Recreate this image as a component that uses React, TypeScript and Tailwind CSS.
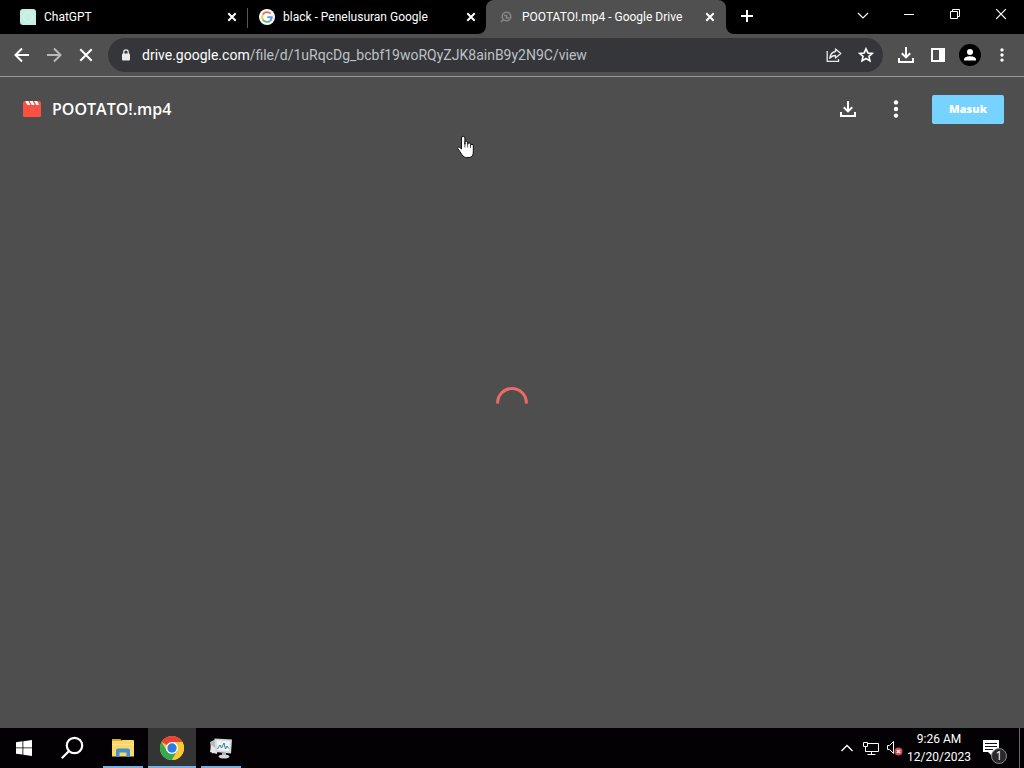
import type { ReactNode } from "react";

const TITLE = "POOTATO!.mp4";

function CloseGlyph() {
  return (
    <svg width="10" height="10" viewBox="0 0 10 10" stroke="#fff" strokeWidth="2" fill="none">
      <path d="M1.300 1.300l7.400 7.400M8.700 1.300l-7.400 7.400" />
    </svg>
  );
}

function DotsGlyph({ r }: { r: number }) {
  return (
    <svg width="18" height="20" viewBox="0 0 18 20" fill="#fff">
      <circle cx="9" cy={10 - r * 3} r={r} />
      <circle cx="9" cy="10" r={r} />
      <circle cx="9" cy={10 + r * 3} r={r} />
    </svg>
  );
}

function DownloadGlyph() {
  return (
    <svg width="18" height="18" viewBox="0 0 18 18" fill="none" stroke="#fff" strokeWidth="2">
      <path d="M9 1v10M4.800 7.200L9 11.400l4.200-4.200M2 12v4h14v-4" />
    </svg>
  );
}

function ChatIcon() {
  return (
    <svg width="16" height="16" viewBox="0 0 16 16">
      <path d="M3 0h10a3 3 0 0 1 3 3v13H3a3 3 0 0 1-3-3V3a3 3 0 0 1 3-3z" fill="#c5efe2" />
      <circle cx="8" cy="8" r="4.500" fill="none" stroke="#d0f3e8" strokeWidth="1.500" />
    </svg>
  );
}

function GoogleIcon() {
  return (
    <svg width="16" height="16" viewBox="0 0 16 16" fill="none" strokeWidth="1.900">
      <circle cx="8" cy="8" r="8" fill="#fff" />
      <path d="M11.600 4.700A4.900 4.900 0 0 0 3.800 5.500" stroke="#e8685f" />
      <path d="M3.800 5.500a4.900 4.900 0 0 0 0 5" stroke="#f5c84b" />
      <path d="M3.800 10.500a4.900 4.900 0 0 0 7.200 1.400" stroke="#63b97b" />
      <path d="M11 11.900A4.700 4.700 0 0 0 12.800 8.300H8.300" stroke="#5d9ae8" />
    </svg>
  );
}

function LoadingIcon() {
  return (
    <svg width="16" height="16" viewBox="0 0 16 16" fill="none" stroke="#858585" strokeWidth="1.600">
      <circle cx="8.500" cy="7.500" r="4.300" />
      <path d="M6 6.500h2.500v2.500h3M3 13l3-3" />
    </svg>
  );
}

function Tab({ icon, title, active, divider }: { icon: ReactNode; title: string; active?: boolean; divider?: boolean }) {
  return (
    <div
      className={
        "relative flex h-[34px] min-w-0 shrink basis-60 items-center pr-2 pl-3 " +
        (active ? "rounded-t-lg bg-[#505050]" : "")
      }
    >
      {active && (
        <>
          <svg className="absolute bottom-0 -left-2" width="8" height="8" viewBox="0 0 8 8">
            <path d="M8 0v8H0a8 8 0 0 0 8-8z" fill="#505050" />
          </svg>
          <svg className="absolute -right-2 bottom-0" width="8" height="8" viewBox="0 0 8 8">
            <path d="M0 0v8h8a8 8 0 0 1-8-8z" fill="#505050" />
          </svg>
        </>
      )}
      <span className="shrink-0">{icon}</span>
      <a href="#" className="ml-2 min-w-0 flex-1 truncate text-[12px] leading-4 text-white">
        {title}
      </a>
      <button type="button" aria-label={"Close " + title} className="flex size-4 shrink-0 items-center justify-center">
        <CloseGlyph />
      </button>
      {divider && <span className="absolute top-2 right-0 h-5 w-px bg-[#555]" />}
    </div>
  );
}

function ToolButton({ label, children, className = "w-8" }: { label: string; children: ReactNode; className?: string }) {
  return (
    <button type="button" aria-label={label} className={"flex h-8 shrink-0 items-center justify-center " + className}>
      {children}
    </button>
  );
}

function TabStrip() {
  return (
    <div className="flex h-[34px] shrink-0 bg-black pl-2 font-['Roboto','Open_Sans',sans-serif]">
      <div className="flex min-w-0 flex-1 -space-x-px">
        <Tab icon={<ChatIcon />} title="ChatGPT" divider />
        <Tab icon={<GoogleIcon />} title="black - Penelusuran Google" />
        <Tab icon={<LoadingIcon />} title={TITLE + " - Google Drive"} active />
        <ToolButton label="New tab" className="ml-1 w-9">
          <svg width="12" height="12" viewBox="0 0 12 12" stroke="#fff" strokeWidth="2">
            <path d="M6 0v12M0 6h12" />
          </svg>
        </ToolButton>
      </div>
      <div className="flex h-7">
        <ToolButton label="Search tabs" className="w-[46px]">
          <svg width="12" height="12" viewBox="0 0 12 12" fill="none" stroke="#fff" strokeWidth="1.200">
            <path d="M1 3l5 5 5-5" />
          </svg>
        </ToolButton>
        <ToolButton label="Minimize" className="w-[46px]">
          <svg width="10" height="10" viewBox="0 0 10 10" stroke="#fff">
            <path d="M0 3.500h10" />
          </svg>
        </ToolButton>
        <ToolButton label="Restore" className="w-[46px]">
          <svg width="10" height="14" viewBox="0 0 10 14" fill="none" stroke="#fff">
            <path d="M.5 2.500h7v7h-7zM2.500 2.500v-2h7v7h-2" />
          </svg>
        </ToolButton>
        <ToolButton label="Close window" className="w-[46px]">
          <svg width="10" height="14" viewBox="0 0 10 14" stroke="#fff" strokeWidth="1.200">
            <path d="M0 0l10 10M10 0L0 10" />
          </svg>
        </ToolButton>
      </div>
    </div>
  );
}

function Toolbar() {
  return (
    <div className="flex h-[43px] shrink-0 items-center border-b border-[#999] bg-[#505050] px-[6px]">
      <ToolButton label="Back">
        <svg width="16" height="16" viewBox="0 0 16 16" fill="none" stroke="#fff" strokeWidth="2">
          <path d="M15 8H2M8 1.500L1.500 8 8 14.500" />
        </svg>
      </ToolButton>
      <ToolButton label="Forward">
        <svg width="16" height="16" viewBox="0 0 16 16" fill="none" stroke="#b8b8b8" strokeWidth="2">
          <path d="M1 8h13M8 1.500L14.500 8 8 14.500" />
        </svg>
      </ToolButton>
      <ToolButton label="Stop">
        <svg width="14" height="14" viewBox="0 0 14 14" fill="none" stroke="#fff" strokeWidth="2">
          <path d="M1.300 1.300l11.400 11.400M12.700 1.300L1.300 12.700" />
        </svg>
      </ToolButton>
      <div className="mr-[7px] ml-[6px] flex h-[34px] min-w-0 flex-1 items-center rounded-full bg-[#35363a] pr-px pl-[13px]">
        <svg className="shrink-0" width="10" height="12" viewBox="0 0 10 12">
          <rect x="1" y="4.500" width="8" height="7" rx="1" fill="#e8eaed" />
          <path d="M2.800 5V3a2.200 2.200 0 0 1 4.400 0v2" fill="none" stroke="#e8eaed" strokeWidth="1.300" />
        </svg>
        <a
          href="#"
          className="ml-[11px] min-w-0 flex-1 truncate font-['Roboto','Open_Sans',sans-serif] text-[14px] leading-5 text-[#bdc1c6]"
        >
          <span className="text-white">drive.google.com</span>/file/d/1uRqcDg_bcbf19woRQyZJK8ainB9y2N9C/view
        </a>
        <ToolButton label="Share this page">
          <svg width="16" height="16" viewBox="0 0 16 16" fill="none" stroke="#e8eaed" strokeWidth="1.300">
            <path d="M1.200 4v10.300h11.300V12" />
            <path d="M9.500 2l5.300 4.500-5.300 4.500V8.500C7 8.500 5 9.300 3.700 11.300 4.200 7.500 6.200 5 9.500 4.500z" strokeLinejoin="round" />
          </svg>
        </ToolButton>
        <ToolButton label="Bookmark this tab">
          <svg width="16" height="16" viewBox="0 0 16 16" fill="none" stroke="#fff" strokeWidth="1.600">
            <path d="M8 1.800l1.850 4.150 4.500.45-3.400 3 1 4.450L8 11.500l-3.950 2.350 1-4.450-3.400-3 4.500-.45z" />
          </svg>
        </ToolButton>
      </div>
      <ToolButton label="Downloads">
        <DownloadGlyph />
      </ToolButton>
      <ToolButton label="Side panel">
        <svg width="14" height="14" viewBox="0 0 14 14">
          <path d="M0 0h14v14H0zM2 2v10h6V2z" fill="#fff" fillRule="evenodd" />
        </svg>
      </ToolButton>
      <ToolButton label="Profile">
        <svg width="22" height="22" viewBox="0 0 22 22">
          <circle cx="11" cy="11" r="11" fill="#000" />
          <circle cx="11" cy="8" r="3" fill="#fff" />
          <path d="M5 16.500v-1.200C5 13 9 12.200 11 12.200s6 .8 6 3.100v1.200z" fill="#fff" />
        </svg>
      </ToolButton>
      <ToolButton label="Chrome menu">
        <DotsGlyph r={1.7} />
      </ToolButton>
    </div>
  );
}

function Viewer() {
  return (
    <main className="grid flex-1 grid-cols-1 grid-rows-1 bg-[#4e4e4e]">
      <header className="col-start-1 row-start-1 flex h-16 items-center self-start pr-5 pl-[23px]">
        <svg width="18" height="18" viewBox="0 0 18 18">
          <rect y="1" width="18" height="16" rx="1.500" fill="#fa5144" />
          <path d="M2.300 1h3l2 4h-3zM6.700 1h3l2 4h-3zM11.200 1h3l2 4h-3z" fill="#fff" />
        </svg>
        <h1 className="ml-[11px] min-w-0 flex-1 truncate text-[16px] leading-6 font-semibold text-white">{TITLE}</h1>
        <ToolButton label="Download" className="w-12">
          <DownloadGlyph />
        </ToolButton>
        <ToolButton label="More actions" className="w-12">
          <DotsGlyph r={2.2} />
        </ToolButton>
        <button
          type="button"
          className="ml-3 h-[29px] w-[72px] rounded-xs bg-[#76d2ff] text-[11px] leading-4 font-extrabold text-white"
        >
          Masuk
        </button>
      </header>
      <div className="col-start-1 row-start-1 place-self-center" role="status" aria-label="Loading">
        <svg width="32" height="32" viewBox="0 0 32 32" fill="none">
          <path d="M1.600 16.500V15.900a14.400 14.400 0 0 1 28.800 0V16.500" stroke="#ef6a66" strokeWidth="3" />
        </svg>
      </div>
    </main>
  );
}

function TaskButton({ label, open, active, children }: { label: string; open?: boolean; active?: boolean; children: ReactNode }) {
  return (
    <button
      type="button"
      aria-label={label}
      className={"flex h-10 w-12 flex-col items-center " + (active ? "bg-[#343434]" : "")}
    >
      <span className="flex flex-1 items-center justify-center">{children}</span>
      {open && <span className={"-mt-[2px] h-[2px] bg-[#76b0e6] " + (active ? "w-12" : "w-10")} />}
    </button>
  );
}

function Taskbar() {
  return (
    <footer className="flex h-10 shrink-0 items-center bg-[#030103] text-white">
      <TaskButton label="Start">
        <svg width="16" height="16" viewBox="0 0 16 16" fill="#fff">
          <path d="M0 2.200l6.500-.9v6.200H0zM7.300 1.200L16 0v7.500H7.300zM0 8.300h6.500v6.300L0 13.700zM7.300 8.300H16V16l-8.700-1.200z" />
        </svg>
      </TaskButton>
      <TaskButton label="Search">
        <svg width="24" height="24" viewBox="0 0 24 24" fill="none" stroke="#fff" strokeWidth="2.200">
          <circle cx="14.500" cy="9.500" r="7.700" />
          <path d="M9 15L1.800 22.200" />
        </svg>
      </TaskButton>
      <div className="ml-[3px] flex gap-px">
        <TaskButton label="File Explorer" open>
          <svg width="22" height="20" viewBox="0 0 22 20">
            <path d="M0 1h8.500l1.500 2H0z" fill="#dca632" />
            <path d="M0 3h9l1.500-1H21a1 1 0 0 1 1 1v15.500H0z" fill="#fbd768" />
            <path d="M0 6h22v1H0z" fill="#ffe391" />
            <path d="M4 19v-6.500a2 2 0 0 1 2-2h10a2 2 0 0 1 2 2V19h-3.500v-4.500h-7V19z" fill="#4390cf" />
          </svg>
        </TaskButton>
        <TaskButton label="Google Chrome" open active>
          <svg width="24" height="24" viewBox="0 0 24 24">
            <circle cx="12" cy="12" r="12" fill="#fcc934" />
            <path d="M12 12L1.600 6A12 12 0 0 1 22.400 6z" fill="#ea4335" />
            <path d="M1.600 6A12 12 0 0 0 12 24l5.200-9H6.800z" fill="#34a853" />
            <path d="M22.400 6H12v6l5.200 3L12 24A12 12 0 0 0 22.400 6z" fill="#fcc934" />
            <circle cx="12" cy="12" r="6" fill="#fff" />
            <circle cx="12" cy="12" r="4.700" fill="#2f7ae5" />
          </svg>
        </TaskButton>
        <TaskButton label="Task Manager" open>
          <svg width="24" height="24" viewBox="0 0 24 24">
            <path d="M1 6l6-3 2 13-6 1.500z" fill="#b5bbba" />
            <path d="M2 9l-1 7 7 2v-5z" fill="#e5e7e5" />
            <path d="M5.500 2.500L23 3.500l-1 14-15.500-1.500z" fill="#d4dad9" />
            <path d="M7.500 4.500l13.500.8-.8 10-11.700-1.100z" fill="#edf5f5" />
            <path d="M8.500 13l2.500-4 1.500 3 2.500-5 1.500 6 1.500-3 1.800 2.500" fill="none" stroke="#397f99" strokeWidth="1" />
            <path d="M13 16.500h4V19h-4z" fill="#a7aeae" />
            <ellipse cx="15" cy="20.500" rx="5.500" ry="2" fill="#d2d6d5" />
          </svg>
        </TaskButton>
      </div>
      <div className="ml-auto flex items-center">
        <ToolButton label="Show hidden icons" className="w-6">
          <svg width="12" height="8" viewBox="0 0 12 8" fill="none" stroke="#fff" strokeWidth="1.400">
            <path d="M.5 7L6 1.500 11.500 7" />
          </svg>
        </ToolButton>
        <ToolButton label="Network" className="w-6">
          <svg width="18" height="16" viewBox="0 0 18 16" fill="none" stroke="#fff">
            <path d="M5.500 3.500h11v8h-13V7M9.500 11.500v3M5.500 14.500h8" />
            <path d="M1.500 2.500h4v4h-4zM3.500 6.500v5" />
          </svg>
        </ToolButton>
        <ToolButton label="Volume muted" className="w-6">
          <svg width="18" height="16" viewBox="0 0 18 16" fill="none">
            <path d="M1.500 5.500h2l4-4v12l-4-4h-2z" stroke="#fff" />
            <circle cx="12.500" cy="11.500" r="4" fill="#cf4a55" />
            <path d="M10.800 9.800l3.400 3.400M14.200 9.800l-3.400 3.400" stroke="#fff" strokeWidth="1.200" />
          </svg>
        </ToolButton>
        <time className="w-16 text-center font-['Roboto','Open_Sans',sans-serif] text-[12px] leading-[18px] whitespace-nowrap">
          9:26 AM
          <br />
          12/20/2023
        </time>
        <button type="button" aria-label="1 new notification" className="relative ml-3 flex h-10 w-9 items-center">
          <svg className="mb-px" width="16" height="18" viewBox="0 0 16 18">
            <path d="M0 1h16v12H9v4l-4-4H0z" fill="#fff" />
            <path d="M2 4.500h12M2 7.500h12M2 10.500h8" stroke="#111" />
          </svg>
          <span className="absolute top-5 left-2 flex size-4 items-center justify-center rounded-full border border-[#888] bg-[#292929] text-[12px] leading-4">
            1
          </span>
        </button>
        <button type="button" aria-label="Show desktop" className="h-10 w-[5px] border-l border-[#666]" />
      </div>
    </footer>
  );
}

export default function App() {
  return (
    <div className="relative flex min-h-screen flex-col bg-[#4e4e4e] font-['Open_Sans','Noto_Sans',sans-serif]">
      <TabStrip />
      <Toolbar />
      <Viewer />
      <Taskbar />
      <svg className="pointer-events-none absolute top-[135px] left-[457px]" width="18" height="24" viewBox="0 0 18 24">
        <path
          d="M4.500 14V3a1.700 1.700 0 0 1 3.400 0v6.200V7.500a1.400 1.400 0 0 1 2.800.3v1.400a1.400 1.400 0 0 1 2.800.2v1.200a1.400 1.400 0 0 1 2.800.2V17c0 3-1.300 5.500-4.300 5.500H9.500c-3 0-4.500-2.500-6.300-5.500L.9 13.800c-.7-1.400.8-2.200 1.900-1.300z"
          fill="#fff"
          stroke="#111"
        />
        <path d="M7.900 8v4.500M10.700 9v3.500M13.500 10.500v2.500" stroke="#222" strokeWidth=".8" />
      </svg>
    </div>
  );
}
